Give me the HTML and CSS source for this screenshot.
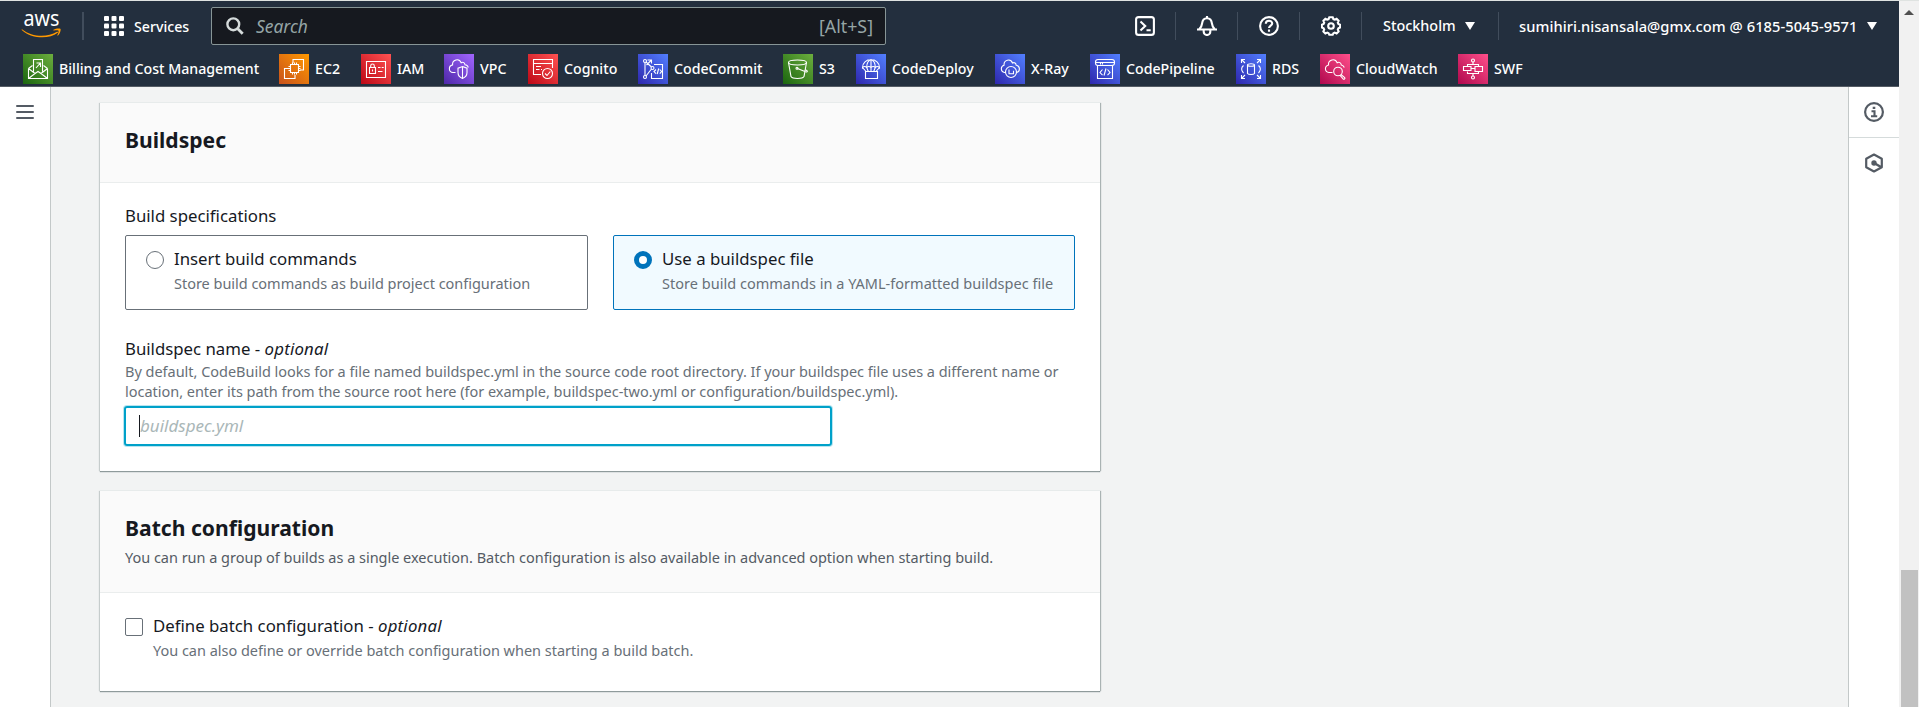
FILE: index.html
```html
<!DOCTYPE html>
<html lang="en">
<head>
<meta charset="utf-8">
<title>CodeBuild - Create build project</title>
<link rel="stylesheet" href="styles.css">
</head>
<body>
<svg class="defs" aria-hidden="true">
  <defs>
    <linearGradient id="green" x1="0" y1="1" x2="1" y2="0"><stop offset="0" stop-color="#1b660f"/><stop offset="1" stop-color="#6cae3e"/></linearGradient>
    <linearGradient id="orange" x1="0" y1="1" x2="1" y2="0"><stop offset="0" stop-color="#c8511b"/><stop offset="1" stop-color="#ff9900"/></linearGradient>
    <linearGradient id="red" x1="0" y1="1" x2="1" y2="0"><stop offset="0" stop-color="#bd0816"/><stop offset="1" stop-color="#ff5252"/></linearGradient>
    <linearGradient id="purple" x1="0" y1="1" x2="1" y2="0"><stop offset="0" stop-color="#4d27a8"/><stop offset="1" stop-color="#a166ff"/></linearGradient>
    <linearGradient id="blue" x1="0" y1="1" x2="1" y2="0"><stop offset="0" stop-color="#2e27ad"/><stop offset="1" stop-color="#527fff"/></linearGradient>
    <linearGradient id="pink" x1="0" y1="1" x2="1" y2="0"><stop offset="0" stop-color="#b0084d"/><stop offset="1" stop-color="#ff4f8b"/></linearGradient>
  </defs>
</svg>
<div class="app">
  <div class="main-col">
    <header class="topnav">
      <div class="nav-row">
        <svg class="logo" viewBox="0 -10 40 38"><text x="1.500" y="14.200" textLength="36" lengthAdjust="spacingAndGlyphs">aws</text><path d="M0 17.200c10 8 25 8.600 35 2.600.8-.4 1.400.4.7 1C27 27.500 10 27 0 18.200c-.5-.6-.3-1.200 0-1z" fill="#f90"/><path d="M31.500 17.700c2.500-1.400 6.500-1.400 7-.7s-.3 4.600-2.500 6.500c-.4.3-.8.1-.6-.4.6-1.400 1.500-3.800 1.100-4.400s-3-.4-4.500-.2c-.6 0-.9-.4-.5-.8z" fill="#f90"/></svg>
        <i class="sep sep-logo"></i>
        <svg class="grid-icon" viewBox="0 0 20 20" fill="#fff"><rect width="5" height="5" rx="1"/><rect x="7.500" width="5" height="5" rx="1"/><rect x="15" width="5" height="5" rx="1"/><rect y="7.500" width="5" height="5" rx="1"/><rect x="7.500" y="7.500" width="5" height="5" rx="1"/><rect x="15" y="7.500" width="5" height="5" rx="1"/><rect y="15" width="5" height="5" rx="1"/><rect x="7.500" y="15" width="5" height="5" rx="1"/><rect x="15" y="15" width="5" height="5" rx="1"/></svg>
        <span class="services">Services</span>
        <div class="search">
          <svg class="search-icon" viewBox="0 0 18 18" fill="none" stroke="#d5dbdb" stroke-width="2.400"><circle cx="7.300" cy="7.300" r="5.900"/><path d="M11.500 11.500l5.200 5.200" stroke-width="2.800"/></svg>
          <span class="search-text">Search</span>
          <span class="search-key">[Alt+S]</span>
        </div>
        <div class="nav-tools">
          <span class="tool"><svg viewBox="0 0 20 20"><rect x="1.100" y="1.100" width="17.800" height="17.800" rx="2.500"/><path d="M5.500 5.600l4.700 4.400-4.700 4.400M11.500 14.300h4.200"/></svg></span>
          <span class="tool"><svg viewBox="0 0 20 20"><path d="M10 2.200c-3 0-4.600 2.200-4.900 5.200-.2 2.600-1 4-3 6.100h15.800c-2-2.100-2.800-3.500-3-6.100C14.600 4.400 13 2.200 10 2.200zM10 0v2M0 13.500h20" /><path d="M6.700 14v1.700a3.300 3.300 0 0 0 6.600 0V14"/></svg></span>
          <span class="tool"><svg viewBox="0 0 20 20"><circle cx="10" cy="10" r="8.900"/><path d="M6.800 7.800c0-4 6.400-3.900 6.400-.3 0 2-3.200 2.300-3.200 4.600M10 13.600v2.200"/></svg></span>
          <span class="tool"><svg viewBox="0 0 20 20"><path d="M8.300 1.200h3.400l.7 1.900 1.300.5 1.900-.8 2 2-.8 1.900.6 1.300 1.700.7v2.700l-1.700.8-.6 1.300.8 1.900-2 2-1.900-.8-1.300.6-.7 1.600H8.300l-.7-1.600-1.300-.6-1.900.8-2-2 .8-1.900-.6-1.300-1.700-.8V8.700l1.700-.7.6-1.300-.8-1.900 2-2 1.900.8 1.300-.5z"/><circle cx="10" cy="10" r="2.800"/></svg></span>
          <span class="region">Stockholm<i class="caret"></i></span>
          <span class="account">sumihiri.nisansala@gmx.com @ 6185-5045-9571<i class="caret"></i></span>
        </div>
      </div>
      <nav class="favorites">
        <span class="fav"><svg viewBox="0 0 30 30"><rect class="tint" width="30" height="30" fill="url(#green)"/><path d="M5.500 14.500v10h19v-10M5.500 14.500L9.500 11.500M24.500 14.500l-4-3M5.500 14.500l6.500 5 3-2 3 2 6.500-5M5.500 24.500l6.500-5M24.500 24.500l-6.500-5M10.500 17.500V5.500h9v12M13 14l4-4.500M13.500 9h4v4"/></svg><b>Billing and Cost Management</b></span>
        <span class="fav"><svg viewBox="0 0 30 30"><rect class="tint" width="30" height="30" fill="url(#orange)"/><path d="M14 9V5.500h10.500V16H21M9.500 14.500h-4v10H16V21M11.500 10.500h8v8h-8zM13.500 8.500v2M15.500 8.500v2M17.500 8.500v2M13.500 18.500v2M15.500 18.500v2M17.500 18.500v2M9.500 12.500h2M9.500 14.500h2M9.500 16.500h2M19.500 12.500h2M19.500 14.500h2M19.500 16.500h2"/></svg><b>EC2</b></span>
        <span class="fav"><svg viewBox="0 0 30 30"><rect class="tint" width="30" height="30" fill="url(#red)"/><path d="M5.500 7.500h19v16h-19zM8.500 13.500h6v6h-6zM9.700 13.500v-1.700a1.800 1.800 0 0 1 3.600 0v1.700M11.500 15.500v2M17 13.500h2.500M20.700 13.500h2M17 17.500h4.500"/></svg><b>IAM</b></span>
        <span class="fav"><svg viewBox="0 0 30 30"><rect class="tint" width="30" height="30" fill="url(#purple)"/><path d="M11.500 18.500H9c-4.500-.5-5-6.500-.4-7.600C8 6 15 3.500 17.200 8.800c2-1.200 3.600 0 3.800 2 1.800.2 3 1.200 3.300 2.700M18.500 12.500l4.500 1.700v4.300c0 3-1.500 4.800-4.500 6-3-1.200-4.500-3-4.500-6v-4.300zM18.500 12.500v12"/></svg><b>VPC</b></span>
        <span class="fav"><svg viewBox="0 0 30 30"><rect class="tint" width="30" height="30" fill="url(#red)"/><path d="M13 20.500H5.500v-15h19V14M5.500 9.500h19M8 12.500h5M8 15.500h3.500M13 15.500h1"/><circle cx="19.500" cy="19.500" r="5"/><path d="M17 19.500l2 2 3.300-4"/></svg><b>Cognito</b></span>
        <span class="fav"><svg viewBox="0 0 30 30"><rect class="tint" width="30" height="30" fill="url(#blue)"/><circle cx="7" cy="7" r="1.500"/><circle cx="7" cy="23" r="1.500"/><circle cx="14.500" cy="14" r="1.500"/><path d="M7 8.500v13M8 8l5.500 5M8 22l5.500-7M9.500 6h4v3.500M13 6.500L8.500 11M16 10.500h8.500v14h-11V19M18 15.500l-2 2 2 2.200M20.700 14.500l-1.500 5.500M21.800 15.500l1.800 2-1.800 2.200"/></svg><b>CodeCommit</b></span>
        <span class="fav"><svg viewBox="0 0 30 30"><rect class="tint" width="30" height="30" fill="url(#green)"/><ellipse cx="14.500" cy="8.500" rx="9" ry="2.500"/><path d="M5.500 8.500L8 22.500c1.500 2.600 11.500 2.600 13 0l2.500-14M14.500 14.500l8 3.200c2.400.8 2.600-.7 0-1.900"/><circle cx="14" cy="14.300" r="1"/></svg><b>S3</b></span>
        <span class="fav"><svg viewBox="0 0 30 30"><rect class="tint" width="30" height="30" fill="url(#blue)"/><path d="M6.500 13.500a8.500 8 0 0 1 17 0c-1.400-1.200-3-1.200-4.200 0-1.300-1.200-3-1.200-4.300 0-1.300-1.200-3-1.200-4.300 0-1.200-1.200-2.800-1.200-4.200 0zM10.700 13.500c0-4 1.500-7 4.300-8 2.800 1 4.300 4 4.300 8M15 5.500v12M6.500 13.500l3.500 4M23.500 13.500l-3.500 4M10.700 13.500l1.600 4M19.300 13.500l-1.600 4M9.500 17.500h12v7h-12z"/></svg><b>CodeDeploy</b></span>
        <span class="fav"><svg viewBox="0 0 30 30"><rect class="tint" width="30" height="30" fill="url(#blue)"/><path d="M11 18.500H9.500c-4-.6-4.300-6.300-.4-7.300C8.500 6 15.500 4 17.500 9c2-1 3.500.2 3.700 2.200 4.200.8 4.200 6.300.3 7.300"/><circle cx="16" cy="18" r="5.500"/><path d="M14 15.500v4.200h4.500v-3"/></svg><b>X-Ray</b></span>
        <span class="fav"><svg viewBox="0 0 30 30"><rect class="tint" width="30" height="30" fill="url(#blue)"/><rect x="5.500" y="5.500" width="19" height="6" rx="2.500"/><path d="M5.500 8.500h19M10.500 8.500v2M12.500 8.500v2M7.500 11.500v13h15v-13M12.500 15.500l-2.500 3 2.500 2.700M16 14.500l-2 7M17.500 15.500l2.500 3-2.500 2.700"/></svg><b>CodePipeline</b></span>
        <span class="fav"><svg viewBox="0 0 30 30"><rect class="tint" width="30" height="30" fill="url(#blue)"/><path d="M5.500 9V5.500H9M5.500 5.500L9 9M21 5.500h3.500V9M24.500 5.500L21 9M5.500 21v3.500H9M5.500 24.500L9 21M21 24.500h3.500V21M24.500 24.500L21 21M7.500 11.500c-2.500 2-2.500 5 0 7.500M22.500 11.500c2.500 2 2.500 5 0 7.500M11.500 11v8.500c1 1.400 6 1.400 7 0V11"/><ellipse cx="15" cy="11" rx="3.500" ry="1.300"/></svg><b>RDS</b></span>
        <span class="fav"><svg viewBox="0 0 30 30"><rect class="tint" width="30" height="30" fill="url(#pink)"/><path d="M12.500 18.500H9c-4.500-.6-4.800-6.300-.5-7.500C8 6 15 3.500 17.200 8.800c2-1.200 4 0 4.100 2.200 1.500.2 2.500 1 3 2.500"/><circle cx="18" cy="17.500" r="4.300"/><path d="M21 20.500l3.700 3c.8 1.200-.8 2.200-1.600 1.400l-3-3.600"/></svg><b>CloudWatch</b></span>
        <span class="fav"><svg viewBox="0 0 30 30"><rect class="tint" width="30" height="30" fill="url(#pink)"/><circle cx="15" cy="6.500" r="1.500"/><circle cx="15" cy="23.500" r="1.500"/><path d="M15 8v2.500M15 22v-2.500M9.500 12.500v-2h11v2M9.500 17.500v2h11v-2M5.500 12.500h7.500v4H5.500zM17 12.500h7.500v5H17zM13 14.500h4"/></svg><b>SWF</b></span>
      </nav>
    </header>

    <div class="workspace">
      <aside class="rail-left"><i class="bar"></i><i class="bar"></i><i class="bar"></i></aside>
      <main class="content">
        <section class="panel">
          <div class="panel-head head-spec"><h2>Buildspec</h2></div>
          <div class="panel-body body-spec">
            <div class="label">Build specifications</div>
            <div class="tiles">
              <div class="tile">
                <i class="radio"></i>
                <div><div class="label">Insert build commands</div><div class="hint tile-hint">Store build commands as build project configuration</div></div>
              </div>
              <div class="tile selected">
                <i class="radio checked"></i>
                <div><div class="label">Use a buildspec file</div><div class="hint tile-hint">Store build commands in a YAML-formatted buildspec file</div></div>
              </div>
            </div>
            <div class="label field-label">Buildspec name - <em>optional</em></div>
            <div class="hint field-hint">By default, CodeBuild looks for a file named buildspec.yml in the source code root directory. If your buildspec file uses a different name or<br>location, enter its path from the source root here (for example, buildspec-two.yml or configuration/buildspec.yml).</div>
            <div class="input"><i class="cursor"></i><span class="placeholder">buildspec.yml</span></div>
          </div>
        </section>
        <section class="panel">
          <div class="panel-head head-batch"><h2>Batch configuration</h2><p class="hint head-hint">You can run a group of builds as a single execution. Batch configuration is also available in advanced option when starting build.</p></div>
          <div class="panel-body body-batch">
            <i class="checkbox"></i>
            <div><div class="label">Define batch configuration - <em>optional</em></div><div class="hint tile-hint">You can also define or override batch configuration when starting a build batch.</div></div>
          </div>
        </section>
      </main>
      <aside class="rail-right">
        <span class="rail-item"><svg viewBox="0 0 20 20" fill="none" stroke="#545b64"><circle cx="10" cy="10" r="8.900" stroke-width="2.200"/><path d="M8.700 5.900h2.600M7.500 9.300h3v4.800M7 14.200h6.200" stroke-width="2.100"/></svg></span>
        <span class="rail-item"><svg viewBox="0 0 20 20" fill="none" stroke="#545b64"><path d="M10 1.500l7.800 4.200v8.600L10 18.500l-7.800-4.200V5.700z" stroke-width="2.200" stroke-linejoin="round"/><circle cx="10" cy="10" r="2.700" fill="#545b64" stroke="none"/><path d="M10 10l7 4" stroke-width="2.400"/></svg></span>
      </aside>
    </div>
  </div>
  <div class="scrollbar"><i class="up"></i><i class="thumb"></i></div>
</div>
</body>
</html>
```

FILE: styles.css
```css
* { box-sizing: border-box; }
body { margin: 0; font-family: "Noto Sans", sans-serif; color: #16191f; overflow: hidden; }
.defs { position: absolute; width: 0; height: 0; }
.app { display: flex; width: 1919px; height: 707px; border-top: 1px solid #dfe3e1; }
.main-col { display: flex; flex-direction: column; width: 1899px; }

/* Top navigation */
.topnav { height: 86px; background: #232f3e; border-bottom: 1px solid #545b64; color: #fff; font-size: 14.2px; font-weight: 500; }
.nav-row { display: flex; align-items: center; height: 50px; padding-left: 22px; }
.logo { width: 40px; height: 38px; flex: none; margin-top: -11px; overflow: visible; }
.logo text { font-family: "Noto Sans", sans-serif; font-size: 22px; font-weight: 400; fill: #fff; }
.sep, .tool::after, .region::after { width: 1px; height: 28px; background: #414d5c; }
.sep-logo { width: 2px; margin: 0 20px 0 20px; }
.grid-icon { width: 20px; height: 20px; }
.services { margin-left: 10px; width: 77px; line-height: 20px; padding-top: 1px; }
.search { display: flex; align-items: center; width: 675px; height: 38px; background: #16191f; border: 1px solid #879596; border-radius: 2px; padding: 0 12px 0 14px; font-weight: 400; color: #95a5a6; }
.search-icon { width: 18px; height: 18px; }
.search-text { margin-left: 12px; font-size: 17.400px; font-style: italic; line-height: 22px; }
.search-key { margin-left: auto; font-size: 17.800px; line-height: 22px; }
.nav-tools { display: flex; align-items: center; margin-left: 249px; }
.tool { display: flex; align-items: center; width: 62px; height: 28px; }
.tool svg { width: 20px; height: 20px; fill: none; stroke: #fff; stroke-width: 2.100; }
.tool::after { content: ""; margin-left: 20px; }
.region, .account { display: flex; align-items: center; line-height: 20px; white-space: nowrap; }
.region { width: 136px; font-size: 14.400px; }
.region::after { content: ""; margin-left: 23px; }
.account { font-size: 14.700px; letter-spacing: .04px; }
.caret { margin-left: 9px; border: 5px solid transparent; border-top: 8px solid #fff; border-bottom: 0; }
.favorites { display: grid; grid-template-columns: 256px 82px 83px 84px 110px 145px 73px 139px 95px 146px 84px 138px auto; padding: 3px 0 0 23px; }
.fav { display: flex; align-items: center; gap: 6px; height: 30px; white-space: nowrap; }
.fav svg { width: 30px; height: 30px; fill: none; stroke: #fff; stroke-width: 1.100; flex: none; }
.fav .tint { stroke: none; }
.fav b { font-weight: 500; padding-bottom: 2px; }

/* Page body */
.workspace { display: flex; flex: 1; background: #f2f3f3; }
.rail-left { display: flex; flex-direction: column; gap: 4px; width: 51px; background: #fff; border-right: 1px solid #c3c8c8; padding: 18px 0 0 16px; }
.bar { width: 18px; height: 2px; background: #545b64; border-radius: 1px; }
.content { display: flex; flex-direction: column; gap: 20px; flex: 1; padding: 16px 0 0 49px; }
.panel { width: 1000px; background: #fff; box-shadow: 0 -1px 0 #e7ebeb, 1px 0 1px #aab3b3, -1px 0 1px #c6cccc, 0 1px 1px #7d8b8c; }
.panel-head { background: #fafafa; border-bottom: 1px solid #eaeded; padding: 23px 25px 0; }
.head-spec { height: 80px; }
.head-batch { height: 102px; }
h2 { margin: 0; font-size: 21.100px; line-height: 28px; font-weight: 700; }
.panel-body { padding: 21px 25px 0; }
.body-spec { height: 288px; }
.body-batch { display: flex; height: 98px; }
.label { font-size: 16.800px; height: 22px; line-height: 24px; white-space: nowrap; }
.label em { letter-spacing: .2px; }
.hint { margin: 0; font-size: 14.500px; line-height: 20px; color: #687078; letter-spacing: -.02px; white-space: nowrap; }
.head-hint { margin-top: 5px; color: #545b64; }
.tile-hint { margin-top: 4px; line-height: 21px; }
.selected .tile-hint { letter-spacing: .02px; }
.tiles { display: grid; grid-template-columns: 463px 462px; gap: 25px; margin-top: 9px; }
.tile { display: flex; gap: 10px; height: 75px; padding: 11px 20px 0; border: 1px solid #687078; border-radius: 2px; }
.selected { background: #f1faff; border-color: #0073bb; }
.radio { width: 18px; height: 18px; margin-top: 4px; border: 1px solid #687078; border-radius: 50%; background: #fff; flex: none; }
.checked { border: 5px solid #0073bb; }
.field-label { margin-top: 27px; }
.field-hint { margin-top: 2px; }
.input { display: flex; align-items: center; width: 708px; height: 40px; margin: 5px 0 0 -1px; border: 2px solid #00a1c9; border-radius: 3px; box-shadow: 0 0 0 1px #b8e5f0; padding-left: 13px; }
.cursor { width: 1px; height: 22px; background: #16191f; }
.placeholder { font-size: 17px; font-style: italic; line-height: 22px; color: #aab7b8; }
.checkbox { width: 18px; height: 18px; margin: 4px 10px 0 0; border: 1px solid #687078; border-radius: 2px; }
.rail-right { width: 51px; background: #fff; border-left: 1px solid #c3c8c8; }
.rail-item { display: flex; align-items: center; justify-content: center; height: 51px; border-bottom: 1px solid #d5dbdb; }
.rail-item:last-child { border-bottom: 0; height: 50px; }
.rail-item svg { width: 20px; height: 20px; }

/* Window scrollbar */
.scrollbar { display: flex; flex-direction: column; align-items: center; justify-content: space-between; width: 20px; background: #f1f1f1; padding-top: 9px; }
.up { border: 5px solid transparent; border-bottom-color: #505050; border-top: 0; }
.thumb { width: 17px; height: 137px; background: #c1c1c1; }
```
